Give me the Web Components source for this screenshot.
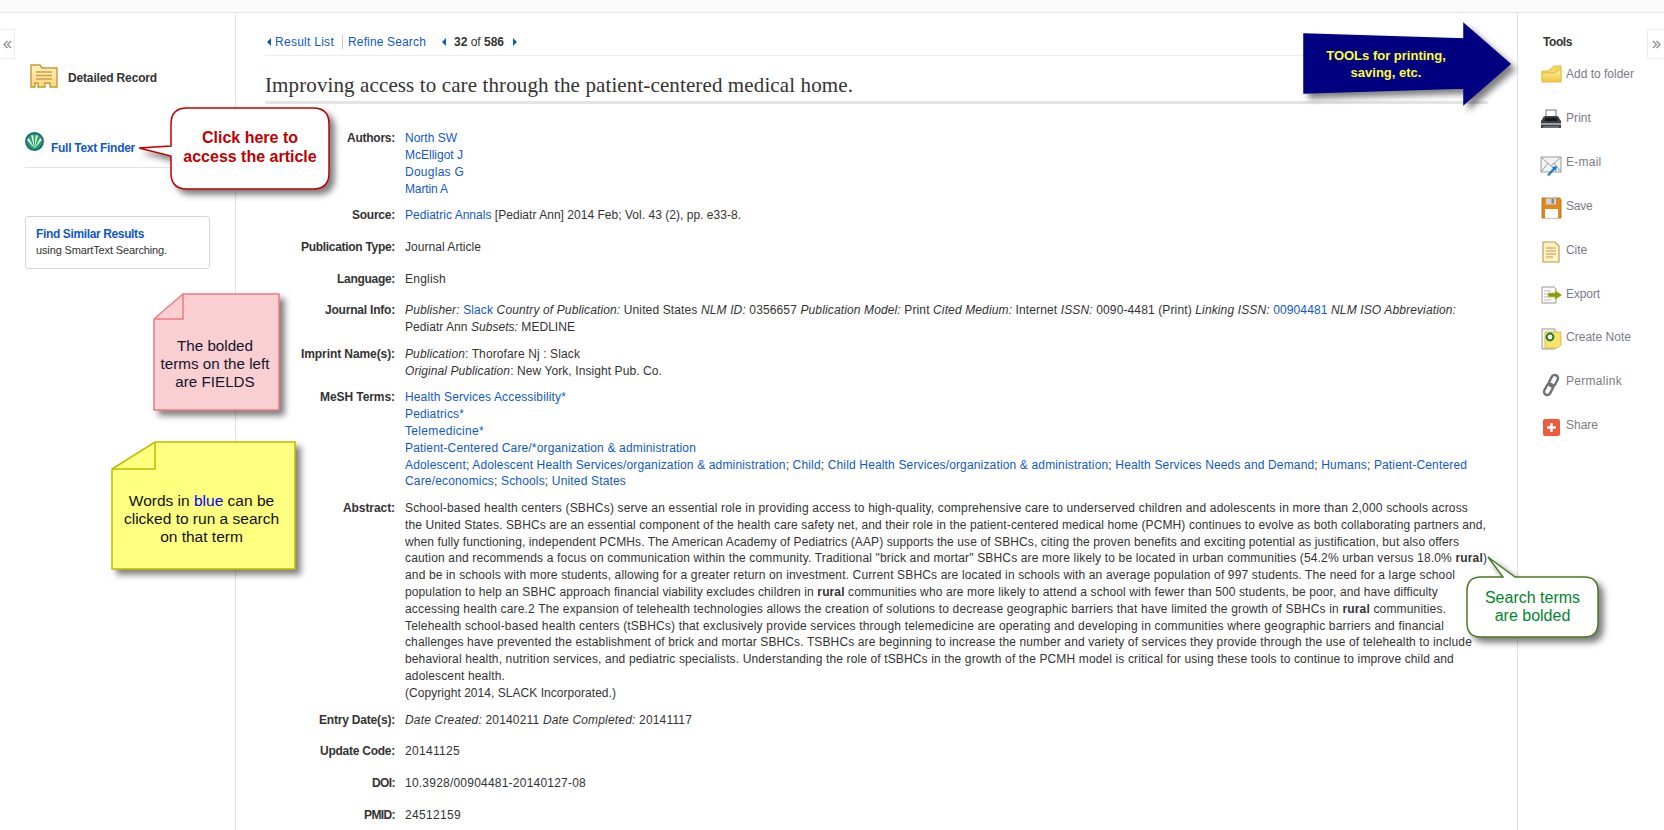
<!DOCTYPE html>
<html>
<head>
<meta charset="utf-8">
<title>Detailed Record</title>
<style>
    html, body { margin: 0; height: 100%; background: #fff; }
    body { font: 12px/16.8px "Liberation Sans", Arial, sans-serif; color: #333; overflow: hidden; }
    a { color: #1059c9; text-decoration: none; }
    .blue { color: #0000ff; }
</style>
</head>
<body>
<record-page>
    <left-rail slot="left"></left-rail>

    <record-nav slot="main"></record-nav>
    <record-title slot="main"><fit-line w="588">Improving access to care through the patient-centered medical home.</fit-line></record-title>
    <record-fields slot="main">
        <record-field label="Authors:" label-w="48">
            <fit-line w="52"><a href="#">North SW</a></fit-line>
            <fit-line w="58"><a href="#">McElligot J</a></fit-line>
            <fit-line w="59"><a href="#">Douglas G</a></fit-line>
            <fit-line w="43"><a href="#">Martin A</a></fit-line>
        </record-field>
        <record-field label="Source:" label-w="43"><fit-line w="336"><a href="#">Pediatric Annals</a> [Pediatr Ann] 2014 Feb; Vol. 43 (2), pp. e33-8.</fit-line></record-field>
        <record-field label="Publication Type:" label-w="94"><fit-line w="76">Journal Article</fit-line></record-field>
        <record-field label="Language:" label-w="58"><fit-line w="41">English</fit-line></record-field>
        <record-field label="Journal Info:" label-w="70">
            <fit-line w="1051"><i>Publisher:</i> <a href="#">Slack</a> <i>Country of Publication:</i> United States <i>NLM ID:</i> 0356657 <i>Publication Model:</i> Print <i>Cited Medium:</i> Internet <i>ISSN:</i> 0090-4481 (Print) <i>Linking ISSN:</i> <a href="#">00904481</a> <i>NLM ISO Abbreviation:</i></fit-line>
            <fit-line w="170">Pediatr Ann <i>Subsets:</i> MEDLINE</fit-line>
        </record-field>
        <record-field label="Imprint Name(s):" label-w="94">
            <fit-line w="175"><i>Publication</i>: Thorofare Nj : Slack</fit-line>
            <fit-line w="257"><i>Original Publication</i>: New York, Insight Pub. Co.</fit-line>
        </record-field>
        <record-field label="MeSH Terms:" label-w="75">
            <fit-line w="161"><a href="#">Health Services Accessibility*</a></fit-line>
            <fit-line w="59"><a href="#">Pediatrics*</a></fit-line>
            <fit-line w="79"><a href="#">Telemedicine*</a></fit-line>
            <fit-line w="291"><a href="#">Patient-Centered Care/*organization &amp; administration</a></fit-line>
            <fit-line w="1062"><a href="#">Adolescent</a>; <a href="#">Adolescent Health Services/organization &amp; administration</a>; <a href="#">Child</a>; <a href="#">Child Health Services/organization &amp; administration</a>; <a href="#">Health Services Needs and Demand</a>; <a href="#">Humans</a>; <a href="#">Patient-Centered</a></fit-line>
            <fit-line w="221"><a href="#">Care/economics</a>; <a href="#">Schools</a>; <a href="#">United States</a></fit-line>
        </record-field>
        <record-field label="Abstract:" label-w="52">
            <fit-line w="1063">School-based health centers (SBHCs) serve an essential role in providing access to high-quality, comprehensive care to underserved children and adolescents in more than 2,000 schools across</fit-line>
            <fit-line w="1081">the United States. SBHCs are an essential component of the health care safety net, and their role in the patient-centered medical home (PCMH) continues to evolve as both collaborating partners and,</fit-line>
            <fit-line w="1054">when fully functioning, independent PCMHs. The American Academy of Pediatrics (AAP) supports the use of SBHCs, citing the proven benefits and exciting potential as justification, but also offers</fit-line>
            <fit-line w="1082">caution and recommends a focus on communication within the community. Traditional "brick and mortar" SBHCs are more likely to be located in urban communities (54.2% urban versus 18.0% <b>rural</b>)</fit-line>
            <fit-line w="1050">and be in schools with more students, allowing for a greater return on investment. Current SBHCs are located in schools with an average population of 997 students. The need for a large school</fit-line>
            <fit-line w="1033">population to help an SBHC approach financial viability excludes children in <b>rural</b> communities who are more likely to attend a school with fewer than 500 students, be poor, and have difficulty</fit-line>
            <fit-line w="1041">accessing health care.2 The expansion of telehealth technologies allows the creation of solutions to decrease geographic barriers that have limited the growth of SBHCs in <b>rural</b> communities.</fit-line>
            <fit-line w="1039">Telehealth school-based health centers (tSBHCs) that exclusively provide services through telemedicine are operating and developing in communities where geographic barriers and financial</fit-line>
            <fit-line w="1067">challenges have prevented the establishment of brick and mortar SBHCs. TSBHCs are beginning to increase the number and variety of services they provide through the use of telehealth to include</fit-line>
            <fit-line w="1049">behavioral health, nutrition services, and pediatric specialists. Understanding the role of tSBHCs in the growth of the PCMH model is critical for using these tools to continue to improve child and</fit-line>
            <fit-line w="100">adolescent health.</fit-line>
            <fit-line w="211">(Copyright 2014, SLACK Incorporated.)</fit-line>
        </record-field>
        <record-field label="Entry Date(s):" label-w="76"><fit-line w="287"><i>Date Created:</i> 20140211 <i>Date Completed:</i> 20141117</fit-line></record-field>
        <record-field label="Update Code:" label-w="75"><fit-line w="55">20141125</fit-line></record-field>
        <record-field label="DOI:" label-w="23"><fit-line w="181">10.3928/00904481-20140127-08</fit-line></record-field>
        <record-field label="PMID:" label-w="31"><fit-line w="56">24512159</fit-line></record-field>
    </record-fields>

    <tools-rail slot="right"></tools-rail>

    <!-- annotations drawn over the page, x/y are page coordinates -->
    <note-callout slot="over" x="171" y="108" w="158" h="81" fill="#fff" stroke="#c00000" text="#c00000" bold lh="19" padb="4"
        d="M16 0H142Q158 0 158 16V65Q158 81 142 81H16Q0 81 0 65V48L-32 40L0 38V16Q0 0 16 0Z">Click here to<br>access the article</note-callout>
    <note-callout slot="over" x="154" y="294" w="125" h="116" fill="#f9cfd1" stroke="#ee7b82" text="#14142e" pad="24" padr="3" size="15.2"
        d="M29 0H125V116H0V25Z" fold="M29 0V25H0">The bolded<br>terms on the left<br>are FIELDS</note-callout>
    <note-callout slot="over" x="112" y="442" w="183" h="127" fill="#ffff80" stroke="#bdbd00" text="#111" pad="27" padr="4" size="15.5"
        d="M43 0H183V127H0V27Z" fold="M43 0V27H0">Words in <span class="blue">blue</span> can be<br>clicked to run a search<br>on that term</note-callout>
    <note-callout slot="over" x="1467" y="577" w="131" h="60" fill="#fff" stroke="#4b7a22" text="#00862b"
        d="M14 0H36L21 -20L48 0H117Q131 0 131 14V46Q131 60 117 60H14Q0 60 0 46V14Q0 0 14 0Z">Search terms<br>are bolded</note-callout>
    <note-callout slot="over" x="1304" y="24" w="164" h="80" fill="#000080" stroke="#000080" text="#ffff33" bold size="13" lh="17"
        d="M0 10L160 15V0L206 40L160 80V64L0 69Z">TOOLs for printing,<br>saving, etc.</note-callout>
</record-page>

<script>
// the reference text has hinted widths, so each line is spaced out to its measured width
// (defined last, so that every font around it is already in place when it measures)
class FitLine extends HTMLElement {
    constructor() {
        super();
        this.shadow = this.attachShadow({mode: 'open'});
        this.shadow.innerHTML = `
        <style>
            :host{
                display: block;
                width: max-content;
                white-space: nowrap;
            }
        </style>
        <slot></slot>
        `;
    }

    connectedCallback() {
        const chars = this.textContent.replace(/\s+/g, ' ').trim().length;
        const natural = this.getBoundingClientRect().width;
        this.style.letterSpacing = ((Number(this.getAttribute('w')) - natural) / chars).toFixed(3) + 'px';
    }
}

class RecordPage extends HTMLElement {
    constructor() {
        super();
        this.shadow = this.attachShadow({mode: 'open'});
        this.shadow.innerHTML = `
        <style>
            :host{
                display: grid;
                grid-template-columns: 235px 1fr 146px;
                position: relative;
                height: 830px;
                box-sizing: border-box;
                padding-top: 13px;
                overflow: hidden;
            }
            .strip{
                position: absolute;
                left: 0; right: 0; top: 0;
                height: 12px;
                background: #fbfbfb;
                border-bottom: 1px solid #e3e3e3;
            }
            .main{
                border-left: 1px solid #e3e3e3;
                border-right: 1px solid #e3e3e3;
                padding: 0 29px;
                min-width: 0;
            }
            .tab{
                position: absolute;
                top: 29px;
                width: 15px;
                height: 30px;
                background: #fff;
                border: 1px solid #eee;
                box-sizing: border-box;
                display: flex;
                align-items: center;
                justify-content: center;
            }
            .tab.l{ left: 0; border-left: 0; }
            .tab.r{ right: 0; width: 17px; border-right: 0; }
            .tab svg{ width: 9px; height: 9px; fill: none; stroke: #888; stroke-width: 1.2; }
        </style>
        <div class="strip"></div>
        <slot name="left"></slot>
        <div class="main"><slot name="main"></slot></div>
        <slot name="right"></slot>
        <div class="tab l"><svg viewBox="0 0 9 9"><path d="M4.5 1L1 4.5L4.5 8M8 1L4.5 4.5L8 8"/></svg></div>
        <div class="tab r"><svg viewBox="0 0 9 9"><path d="M1 1L4.5 4.5L1 8M4.5 1L8 4.5L4.5 8"/></svg></div>
        <slot name="over"></slot>
        `;
    }
}

class LeftRail extends HTMLElement {
    constructor() {
        super();
        this.shadow = this.attachShadow({mode: 'open'});
        this.shadow.innerHTML = `
        <style>
            :host{
                display: block;
                padding: 51px 25px 0;
            }
            a{ color: #1059c9; text-decoration: none; font-weight: bold; }
            .detailed{
                display: flex;
                align-items: center;
                gap: 10px;
                margin-left: 5px;
                height: 24px;
                font-weight: bold;
                color: #333;
            }
            .detailed fit-line{ margin-top: 5px; }
            .finder{
                display: flex;
                align-items: flex-start;
                gap: 7px;
                margin-top: 44px;
                padding-bottom: 10px;
                border-bottom: 1px solid #e3e3e3;
            }
            .finder fit-line{ margin-top: 8px; }
            .similar{
                margin-top: 48px;
                height: 53px;
                box-sizing: border-box;
                padding: 9px 10px;
                border: 1px solid #d6d6d6;
                border-radius: 3px;
                font-size: 11px;
                line-height: 16px;
            }
            .similar a{ font-size: 12px; }
        </style>
        <div class="detailed">
            <svg width="28" height="24" viewBox="0 0 28 24">
                <defs><linearGradient id="g" x1="0" y1="0" x2="0" y2="1"><stop offset="0" stop-color="#fff2c0"/><stop offset="1" stop-color="#f8d67c"/></linearGradient></defs>
                <path d="M1 1H10L12 4H27V23H20V19H15V23H8V19H5V23H1Z" fill="url(#g)" stroke="#c49a35" stroke-width="1.4"/>
                <path d="M6 8H22M6 11.5H22M6 15H22" stroke="#cf9f52" stroke-width="1.6"/>
            </svg>
            <fit-line w="89">Detailed Record</fit-line>
        </div>
        <div class="finder">
            <svg width="19" height="19" viewBox="0 0 19 19">
                <circle cx="9.5" cy="9.5" r="8.6" fill="#23a05f" stroke="#1d5f8a" stroke-width="1.6"/>
                <path d="M9.5 16.500L2.200 8L3.800 5.800ZM9.500 16.500L6 3.600L8.300 3.200ZM9.500 16.500L10.700 3.200L13 3.600ZM9.500 16.500L15.200 5.800L16.800 8Z" fill="#e6f6ec"/>
            </svg>
            <fit-line w="84"><a href="#">Full Text Finder</a></fit-line>
        </div>
        <div class="similar">
            <fit-line w="108"><a href="#">Find Similar Results</a></fit-line>
            <fit-line w="131">using SmartText Searching.</fit-line>
        </div>
        `;
    }
}

class RecordNav extends HTMLElement {
    constructor() {
        super();
        this.shadow = this.attachShadow({mode: 'open'});
        this.shadow.innerHTML = `
        <style>
            :host{
                display: flex;
                align-items: center;
                padding: 21px 0 4px 2px;
                border-bottom: 1px solid #eee;
            }
            a{ color: #1059c9; text-decoration: none; }
            svg{ width: 4px; height: 8px; fill: #1059c9; flex: none; }
            .sep{ width: 1px; height: 14px; background: #ccc; margin: 0 5px 0 8px; }
            .count{ margin: 0 9px 0 8px; color: #333; }
        </style>
        <svg viewBox="0 0 4 8" style="margin-right:4px"><path d="M4 0V8L0 4Z"/></svg>
        <fit-line w="59"><a href="#">Result List</a></fit-line>
        <span class="sep"></span>
        <fit-line w="78"><a href="#">Refine Search</a></fit-line>
        <svg viewBox="0 0 4 8" style="margin-left:16px"><path d="M4 0V8L0 4Z"/></svg>
        <fit-line class="count" w="50"><b>32</b> of <b>586</b></fit-line>
        <svg viewBox="0 0 4 8"><path d="M0 0V8L4 4Z"/></svg>
        `;
    }
}

class RecordTitle extends HTMLElement {
    constructor() {
        super();
        this.shadow = this.attachShadow({mode: 'open'});
        this.shadow.innerHTML = `
        <style>
            :host{
                display: block;
                padding: 17px 0 4px;
                border-bottom: 3px solid #e4e4e4;
                font: 21px/24px "Liberation Serif", serif;
                color: #333;
            }
        </style>
        <slot></slot>
        `;
    }
}

class RecordFields extends HTMLElement {
    constructor() {
        super();
        this.shadow = this.attachShadow({mode: 'open'});
        this.shadow.innerHTML = `
        <style>
            :host{ display: block; padding-top: 26.5px; }
        </style>
        <slot></slot>
        `;
    }
}

class RecordField extends HTMLElement {
    constructor() {
        super();
        this.shadow = this.attachShadow({mode: 'open'});
        this.render();
    }

    render() {
        this.shadow.innerHTML = `
        <style>
            :host{
                display: grid;
                grid-template-columns: 130px 1fr;
                column-gap: 10px;
                box-sizing: border-box;
                min-height: 31.7px;
                padding-bottom: 9.9px;
            }
            .label{ font-weight: bold; color: #333; }
            .label fit-line{ margin-left: auto; }
        </style>
        <div class="label"><fit-line w="${this.getAttribute('label-w')}">${this.getAttribute('label')}</fit-line></div>
        <div><slot></slot></div>
        `;
    }
}

// icons of the tools column, all on a 24 box
const TOOL_ICONS = {
    folder: `<defs><linearGradient id="f" x1="0" y1="0" x2="0" y2="1"><stop offset="0" stop-color="#fff3a8"/><stop offset="1" stop-color="#f2c73e"/></linearGradient></defs>
        <path d="M3 9L9 9L15 4H22V18H3Z" fill="#f6d765" stroke="#dcb030" stroke-width=".8"/><path d="M3 11H15L22 7V20H3Z" fill="url(#f)" stroke="#dcb030" stroke-width=".8"/>`,
    print: `<rect x="7" y="3" width="10" height="8" fill="#fff" stroke="#777"/><path d="M4 11Q4 9 7 9H17Q20 9 20 11L22 14V21H2V14Z" fill="#3b3f44"/><rect x="2" y="16" width="20" height="2" fill="#9aa0a6"/><rect x="6" y="11" width="12" height="3" fill="#15181b"/><rect x="4" y="19" width="16" height="2" fill="#6b7076"/>`,
    mail: `<path d="M2 5H22V20H2Z" fill="#f4f4f4" stroke="#999"/><path d="M2 5L12 14L22 5M2 20L9 11M22 20L15 11" fill="none" stroke="#999"/><path d="M8 23L14 16L12 15L18 14L17 19L15.500 18L10 24Z" fill="#1d7fd0"/>`,
    save: `<path d="M3 2H21L22 4V22H3Z" fill="#e08a1e" stroke="#b8650d" stroke-width=".8"/><rect x="7" y="2.500" width="10" height="6" fill="#cfd4da"/><rect x="12.500" y="3" width="2.500" height="4.500" fill="#7e8790"/><rect x="6" y="13" width="13" height="9" fill="#fbfbfb"/>`,
    cite: `<path d="M4 2H16L20 6V22H4Z" fill="#fdf2c4" stroke="#b99c45" stroke-width="1.100"/><path d="M7 8H17M7 11H17M7 14H17M7 17H14" stroke="#dcb274" stroke-width="1.500"/>`,
    export: `<path d="M3 4H15L17 6V20H3Z" fill="#fafafa" stroke="#999"/><path d="M5 8H12M5 11H10M5 14H10M5 17H12" stroke="#bbb"/><path d="M9 10H16V7.500L23 12L16 16.500V14H9Z" fill="#8a9a10" stroke="#c9d24d" stroke-width=".6"/>`,
    note: `<path d="M3 2H16V22H3Z" fill="#f5f5f5" stroke="#999"/><path d="M6 5H22V18L18 21H6Z" fill="#f9e36b" stroke="#c9ac2c" stroke-width=".7"/><circle cx="11" cy="10" r="3.400" fill="#fff" stroke="#1f7d28" stroke-width="2"/>`,
    link: `<g fill="none" stroke="#6e7276" stroke-width="2.400"><rect x="11" y="1.500" width="6.500" height="12" rx="3.200" transform="rotate(28 14 8)"/><rect x="6.500" y="10.500" width="6.500" height="12" rx="3.200" transform="rotate(28 10 16)"/></g>`,
    share: `<rect x="4" y="3" width="17" height="17" rx="2" fill="#f05a3c"/><path d="M12.500 7V16M8 11.500H17" stroke="#fff" stroke-width="2.400"/>`
};

class ToolItem extends HTMLElement {
    constructor() {
        super();
        this.shadow = this.attachShadow({mode: 'open'});
        this.shadow.innerHTML = `
        <style>
            :host{
                display: flex;
                align-items: center;
                gap: 3px;
                height: 43.9px;
                margin-left: -4px;
                color: #7b7b85;
            }
            svg{ width: 24px; height: 24px; flex: none; margin-top: ${this.getAttribute('drop') || 3}px; }
        </style>
        <svg viewBox="0 0 24 24">${TOOL_ICONS[this.getAttribute('icon')]}</svg>
        <fit-line w="${this.getAttribute('w')}">${this.getAttribute('text')}</fit-line>
        `;
    }
}

class ToolsRail extends HTMLElement {
    constructor() {
        super();
        this.shadow = this.attachShadow({mode: 'open'});
        this.shadow.innerHTML = `
        <style>
            :host{
                display: block;
                padding: 21px 0 0 25px;
            }
            h3{
                margin: 0 0 1.5px;
                font-size: 12px;
                line-height: 17px;
                font-weight: bold;
                color: #333;
            }
        </style>
        <h3><fit-line w="29">Tools</fit-line></h3>
        <tool-item icon="folder" drop="0" w="68" text="Add to folder"></tool-item>
        <tool-item icon="print" drop="1" w="25" text="Print"></tool-item>
        <tool-item icon="mail" drop="3" w="35.5" text="E-mail"></tool-item>
        <tool-item icon="save" drop="3" w="26.5" text="Save"></tool-item>
        <tool-item icon="cite" drop="3" w="21" text="Cite"></tool-item>
        <tool-item icon="export" drop="3" w="34" text="Export"></tool-item>
        <tool-item icon="note" drop="3" w="65" text="Create Note"></tool-item>
        <tool-item icon="link" drop="6" w="56" text="Permalink"></tool-item>
        <tool-item icon="share" drop="5" w="32" text="Share"></tool-item>
        `;
    }
}

class NoteCallout extends HTMLElement {
    constructor() {
        super();
        this.shadow = this.attachShadow({mode: 'open'});
        this.render();
    }

    render() {
        const a = (n) => this.getAttribute(n);
        const fold = a('fold') ? `<path d="${a('fold')}" fill="none" stroke="${a('stroke')}" stroke-width="1.5"/>` : '';
        this.shadow.innerHTML = `
        <style>
            :host{
                position: absolute;
                left: ${a('x')}px;
                top: ${a('y')}px;
                width: ${a('w')}px;
                height: ${a('h')}px;
                box-sizing: border-box;
                padding: ${a('pad') || 0}px ${a('padr') || 0}px ${a('padb') || 0}px 0;
                display: flex;
                align-items: center;
                justify-content: center;
                text-align: center;
                font: ${this.hasAttribute('bold') ? 'bold' : 'normal'} ${a('size') || 16}px/${a('lh') || 18}px "Liberation Sans", Arial, sans-serif;
                color: ${a('text')};
            }
            svg{
                position: absolute;
                left: 0;
                top: 0;
                width: 100%;
                height: 100%;
                overflow: visible;
                filter: drop-shadow(5px 5px 3px rgba(0,0,0,.5));
            }
            div{ position: relative; }
        </style>
        <svg viewBox="0 0 ${a('w')} ${a('h')}">
            <path d="${a('d')}" fill="${a('fill')}" stroke="${a('stroke')}" stroke-width="1.5"/>
            ${fold}
        </svg>
        <div><slot></slot></div>
        `;
    }
}

customElements.define('tool-item', ToolItem);
customElements.define('tools-rail', ToolsRail);
customElements.define('left-rail', LeftRail);
customElements.define('record-nav', RecordNav);
customElements.define('record-title', RecordTitle);
customElements.define('record-fields', RecordFields);
customElements.define('record-field', RecordField);
customElements.define('note-callout', NoteCallout);
customElements.define('record-page', RecordPage);
customElements.define('fit-line', FitLine);
</script>
</body>
</html>
